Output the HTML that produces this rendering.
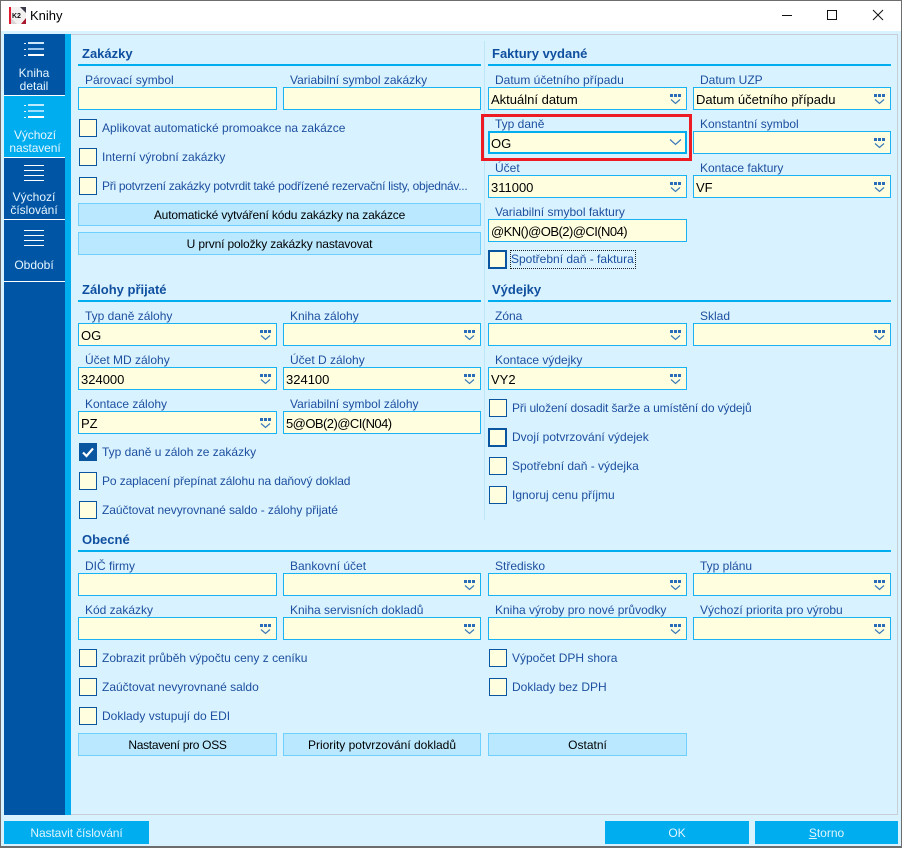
<!DOCTYPE html>
<html lang="cs"><head><meta charset="utf-8"><title>Knihy</title>
<style>
html,body{margin:0;padding:0}
body{width:902px;height:848px;position:relative;overflow:hidden;background:#d9f2ff;font-family:"Liberation Sans",sans-serif;font-size:12px;color:#1c4f9f}
div,span,svg{position:absolute;box-sizing:border-box;white-space:nowrap}
.l{height:14px;line-height:14px;font-size:12px;color:#1c4f9f}
.f{height:23px;background:#ffffe0;border:1px solid #18b2f5;color:#000;font-size:13px;line-height:23px;padding-left:2px}
.w199{width:199px}.w198{width:198px}
.c{width:18px;height:18px;background:#ffffe0;border:1px solid #0a559f}
.t{height:16px;line-height:16px;font-size:12px;color:#1c4f9f}
.b{height:23px;background:#b9e8ff;border:1px solid #6ed0ff;color:#000;font-size:12px;line-height:23px;text-align:center}
.h{font-weight:bold;font-size:13px;line-height:16px;height:16px;color:#0f4f9f}
.r{height:2px;background:#00adef;width:403px}
.i{width:12px;height:11px}
.n{color:#e6f6ff;font-size:12px;line-height:13px;text-align:center;width:62px;left:3px}
.m{background:#fff;height:1px;left:24px;width:20px}
.x{height:23px;background:#00adef;color:#e0f5ff;font-size:12px;line-height:24px;text-align:center}
</style></head><body>
<svg width="0" height="0" style="left:0;top:0"><defs>
<symbol id="d" viewBox="0 0 12 11"><rect x="0" y="0" width="3" height="3" fill="#2b6cb8"/><rect x="4" y="0" width="3" height="3" fill="#2b6cb8"/><rect x="8" y="0" width="3" height="3" fill="#2b6cb8"/><path d="M1 5.5L5.5 9.5L10 5.5" fill="none" stroke="#3a78b8" stroke-width="1.2"/></symbol>
</defs></svg>

<!-- title bar -->
<div style="left:0;top:0;width:902px;height:31px;background:#fff"></div>
<svg style="left:9px;top:7px" width="17" height="17" viewBox="0 0 17 17"><rect width="17" height="17" fill="#f4f1f1"/><rect width="2" height="17" fill="#e01b30"/><path d="M11 0L17 0L17 6Z" fill="#3a3a4a"/><path d="M12 17L17 11L17 17Z" fill="#a8182c"/><path d="M2 11L8 17L2 17Z" fill="#d9d4d6"/><text x="3" y="11" font-family="Liberation Sans" font-size="7" font-weight="bold" fill="#111">K2</text></svg>
<div style="left:30px;top:8px;font-size:13px;line-height:16px;color:#000">Knihy</div>
<svg style="left:780px;top:8px" width="110" height="16" viewBox="0 0 110 16"><path d="M2 7.5H12" stroke="#111" stroke-width="1"/><rect x="47.5" y="2.5" width="9" height="9" fill="none" stroke="#111" stroke-width="1"/><path d="M93 2L103 12M103 2L93 12" stroke="#111" stroke-width="1"/></svg>

<!-- outer frame -->
<div style="left:0;top:0;width:902px;height:1px;background:#6d6d6d"></div>
<div style="left:0;top:846px;width:902px;height:2px;background:#6d6d6d"></div>
<div style="left:0;top:0;width:1px;height:848px;background:#6d6d6d"></div>
<div style="left:901px;top:0;width:1px;height:848px;background:#6d6d6d"></div>

<!-- panel -->
<div style="left:71px;top:34px;width:827px;height:781px;border:1px solid #c8cdd6;border-left:0"></div>

<!-- sidebar -->
<div style="left:4px;top:34px;width:61px;height:781px;background:#0055a5"></div>
<div style="left:65px;top:34px;width:6px;height:781px;background:#00adef"></div>
<div style="left:4px;top:95px;width:61px;height:63px;background:#00adef;border-top:1px solid #fff;border-bottom:1px solid #fff"></div>
<div style="left:4px;top:219px;width:61px;height:1px;background:#fff"></div>
<div style="left:4px;top:281px;width:61px;height:1px;background:#fff"></div>

<svg style="left:23px;top:41px" width="22" height="18" viewBox="0 0 22 18"><g fill="#dff3ff"><rect x="1" y="2" width="2" height="1"/><rect x="1" y="8" width="2" height="1"/><rect x="1" y="14" width="2" height="1"/></g><rect x="5" y="1" width="16" height="2" fill="#cfe8fb"/><rect x="5" y="7" width="16" height="2" fill="#9cc7ee"/><rect x="5" y="13" width="16" height="2" fill="#fff"/></svg>
<svg style="left:23px;top:103px" width="22" height="18" viewBox="0 0 22 18"><g fill="#e8f8ff"><rect x="1" y="2" width="2" height="1"/><rect x="1" y="8" width="2" height="1"/><rect x="1" y="14" width="2" height="1"/></g><rect x="5" y="1" width="16" height="2" fill="#c0ebff"/><rect x="5" y="7" width="16" height="2" fill="#9fe0ff"/><rect x="5" y="13" width="16" height="2" fill="#fff"/></svg>
<div class="m" style="top:165px"></div><div class="m" style="top:170px"></div><div class="m" style="top:175px"></div><div class="m" style="top:180px"></div>
<div class="m" style="top:230px"></div><div class="m" style="top:235px"></div><div class="m" style="top:240px"></div><div class="m" style="top:245px"></div>

<div class="n" style="top:67px">Kniha<br>detail</div>
<div class="n" style="top:129px;left:4px;letter-spacing:-.1px">Výchozí<br>nastavení</div>
<div class="n" style="top:191px">Výchozí<br>číslování</div>
<div class="n" style="top:259px;left:3px">Období</div>

<!-- divider -->
<div style="left:484px;top:41px;width:1px;height:479px;background:#bde6fa"></div>

<!-- Zakázky -->
<div class="h" style="left:82px;top:46px">Zakázky</div><div class="r" style="left:78px;top:64px"></div>
<div class="l" style="left:85px;top:73px">Párovací symbol</div><div class="f w199" style="left:78px;top:87px"></div>
<div class="l" style="left:290px;top:73px">Variabilní symbol zakázky</div><div class="f w198" style="left:283px;top:87px"></div>
<div class="c" style="left:79px;top:119px"></div><div class="t" style="left:102px;top:120px">Aplikovat automatické promoakce na zakázce</div>
<div class="c" style="left:79px;top:148px"></div><div class="t" style="left:102px;top:149px">Interní výrobní zakázky</div>
<div class="c" style="left:79px;top:177px"></div><div class="t" style="left:102px;top:178px;letter-spacing:-.28px">Při potvrzení zakázky potvrdit také podřízené rezervační listy, objednáv...</div>
<div class="b" style="left:78px;top:203px;width:403px;letter-spacing:-.15px">Automatické vytváření kódu zakázky na zakázce</div>
<div class="b" style="left:78px;top:232px;width:403px;letter-spacing:-.15px">U první položky zakázky nastavovat</div>

<!-- Faktury vydané -->
<div class="h" style="left:492px;top:46px">Faktury vydané</div><div class="r" style="left:488px;top:64px"></div>
<div class="l" style="left:495px;top:73px">Datum účetního případu</div><div class="f w199" style="left:488px;top:87px">Aktuální datum</div><svg class="i" style="left:670px;top:94px"><use href="#d"/></svg>
<div class="l" style="left:700px;top:73px">Datum UZP</div><div class="f w198" style="left:693px;top:87px">Datum účetního případu</div><svg class="i" style="left:874px;top:94px"><use href="#d"/></svg>
<div class="l" style="left:495px;top:117px">Typ daně</div>
<div class="f w199" style="left:488px;top:131px;border:2px solid #00adef;line-height:22px;padding-left:1px">OG</div>
<svg style="left:669px;top:138px" width="13" height="8" viewBox="0 0 13 8"><path d="M1 1.5L6.5 6.5L12 1.5" fill="none" stroke="#3a78b8" stroke-width="1.2"/></svg>
<div style="left:481px;top:114px;width:211px;height:47px;border:3px solid #ed1c24"></div>
<div class="l" style="left:700px;top:117px">Konstantní symbol</div><div class="f w198" style="left:693px;top:131px"></div><svg class="i" style="left:874px;top:138px"><use href="#d"/></svg>
<div class="l" style="left:495px;top:161px">Účet</div><div class="f w199" style="left:488px;top:175px">311000</div><svg class="i" style="left:670px;top:182px"><use href="#d"/></svg>
<div class="l" style="left:700px;top:161px">Kontace faktury</div><div class="f w198" style="left:693px;top:175px">VF</div><svg class="i" style="left:874px;top:182px"><use href="#d"/></svg>
<div class="l" style="left:495px;top:205px">Variabilní smybol faktury</div><div class="f w199" style="left:488px;top:219px;letter-spacing:-.55px">@KN()@OB(2)@CI(N04)</div>
<div class="c" style="left:488px;top:250px;width:19px;height:19px;border-width:2px"></div>
<div class="t" style="left:511px;top:251px;height:17px;outline:1px dotted #222;padding:0 1px 0 0">Spotřební daň - faktura</div>

<!-- Zálohy přijaté -->
<div class="h" style="left:82px;top:282px">Zálohy přijaté</div><div class="r" style="left:78px;top:300px"></div>
<div class="l" style="left:85px;top:309px">Typ daně zálohy</div><div class="f w199" style="left:78px;top:323px">OG</div><svg class="i" style="left:260px;top:330px"><use href="#d"/></svg>
<div class="l" style="left:290px;top:309px">Kniha zálohy</div><div class="f w198" style="left:283px;top:323px"></div><svg class="i" style="left:464px;top:330px"><use href="#d"/></svg>
<div class="l" style="left:85px;top:353px">Účet MD zálohy</div><div class="f w199" style="left:78px;top:367px">324000</div><svg class="i" style="left:260px;top:374px"><use href="#d"/></svg>
<div class="l" style="left:290px;top:353px">Účet D zálohy</div><div class="f w198" style="left:283px;top:367px">324100</div><svg class="i" style="left:464px;top:374px"><use href="#d"/></svg>
<div class="l" style="left:85px;top:397px">Kontace zálohy</div><div class="f w199" style="left:78px;top:411px">PZ</div><svg class="i" style="left:260px;top:418px"><use href="#d"/></svg>
<div class="l" style="left:290px;top:397px">Variabilní symbol zálohy</div><div class="f w198" style="left:283px;top:411px;letter-spacing:-.55px">5@OB(2)@CI(N04)</div>
<div class="c" style="left:79px;top:443px;background:#0a559f"></div>
<svg style="left:81px;top:445px" width="14" height="14" viewBox="0 0 14 14"><path d="M2 7.5L5.5 11L12 3.5" fill="none" stroke="#fff" stroke-width="2.2"/></svg>
<div class="t" style="left:102px;top:444px">Typ daně u záloh ze zakázky</div>
<div class="c" style="left:79px;top:472px"></div><div class="t" style="left:102px;top:473px;letter-spacing:-.1px">Po zaplacení přepínat zálohu na daňový doklad</div>
<div class="c" style="left:79px;top:501px"></div><div class="t" style="left:102px;top:502px;letter-spacing:-.05px">Zaúčtovat nevyrovnané saldo - zálohy přijaté</div>

<!-- Výdejky -->
<div class="h" style="left:492px;top:282px">Výdejky</div><div class="r" style="left:488px;top:300px"></div>
<div class="l" style="left:495px;top:309px">Zóna</div><div class="f w199" style="left:488px;top:323px"></div><svg class="i" style="left:670px;top:330px"><use href="#d"/></svg>
<div class="l" style="left:700px;top:309px">Sklad</div><div class="f w198" style="left:693px;top:323px"></div><svg class="i" style="left:874px;top:330px"><use href="#d"/></svg>
<div class="l" style="left:495px;top:353px">Kontace výdejky</div><div class="f w199" style="left:488px;top:367px">VY2</div><svg class="i" style="left:670px;top:374px"><use href="#d"/></svg>
<div class="c" style="left:489px;top:399px"></div><div class="t" style="left:512px;top:400px;letter-spacing:-.13px">Při uložení dosadit šarže a umístění do výdejů</div>
<div class="c" style="left:488px;top:428px;width:19px;height:19px;border-width:2px"></div><div class="t" style="left:512px;top:429px">Dvojí potvrzování výdejek</div>
<div class="c" style="left:489px;top:457px"></div><div class="t" style="left:512px;top:458px">Spotřební daň - výdejka</div>
<div class="c" style="left:489px;top:486px"></div><div class="t" style="left:512px;top:487px">Ignoruj cenu příjmu</div>

<!-- Obecné -->
<div class="h" style="left:82px;top:532px">Obecné</div><div class="r" style="left:78px;top:550px;width:813px"></div>
<div class="l" style="left:85px;top:559px">DIČ firmy</div><div class="f w199" style="left:78px;top:573px"></div>
<div class="l" style="left:290px;top:559px">Bankovní účet</div><div class="f w198" style="left:283px;top:573px"></div><svg class="i" style="left:464px;top:580px"><use href="#d"/></svg>
<div class="l" style="left:495px;top:559px">Středisko</div><div class="f w199" style="left:488px;top:573px"></div><svg class="i" style="left:670px;top:580px"><use href="#d"/></svg>
<div class="l" style="left:700px;top:559px">Typ plánu</div><div class="f w198" style="left:693px;top:573px"></div><svg class="i" style="left:874px;top:580px"><use href="#d"/></svg>
<div class="l" style="left:85px;top:603px">Kód zakázky</div><div class="f w199" style="left:78px;top:617px"></div><svg class="i" style="left:260px;top:624px"><use href="#d"/></svg>
<div class="l" style="left:290px;top:603px">Kniha servisních dokladů</div><div class="f w198" style="left:283px;top:617px"></div><svg class="i" style="left:464px;top:624px"><use href="#d"/></svg>
<div class="l" style="left:495px;top:603px">Kniha výroby pro nové průvodky</div><div class="f w199" style="left:488px;top:617px"></div><svg class="i" style="left:670px;top:624px"><use href="#d"/></svg>
<div class="l" style="left:700px;top:603px">Výchozí priorita pro výrobu</div><div class="f w198" style="left:693px;top:617px"></div><svg class="i" style="left:874px;top:624px"><use href="#d"/></svg>
<div class="c" style="left:79px;top:649px"></div><div class="t" style="left:102px;top:650px">Zobrazit průběh výpočtu ceny z ceníku</div>
<div class="c" style="left:79px;top:678px"></div><div class="t" style="left:102px;top:679px">Zaúčtovat nevyrovnané saldo</div>
<div class="c" style="left:79px;top:707px"></div><div class="t" style="left:102px;top:708px">Doklady vstupují do EDI</div>
<div class="c" style="left:489px;top:649px"></div><div class="t" style="left:512px;top:650px">Výpočet DPH shora</div>
<div class="c" style="left:489px;top:678px"></div><div class="t" style="left:512px;top:679px">Doklady bez DPH</div>
<div class="b" style="left:78px;top:733px;width:199px;letter-spacing:-.3px">Nastavení pro OSS</div>
<div class="b" style="left:283px;top:733px;width:198px">Priority potvrzování dokladů</div>
<div class="b" style="left:488px;top:733px;width:199px">Ostatní</div>

<!-- bottom -->
<div class="x" style="left:4px;top:821px;width:145px;letter-spacing:-.1px">Nastavit číslování</div>
<div class="x" style="left:605px;top:821px;width:144px">OK</div>
<div class="x" style="left:755px;top:821px;width:143px"><u>S</u>torno</div>
</body></html>
